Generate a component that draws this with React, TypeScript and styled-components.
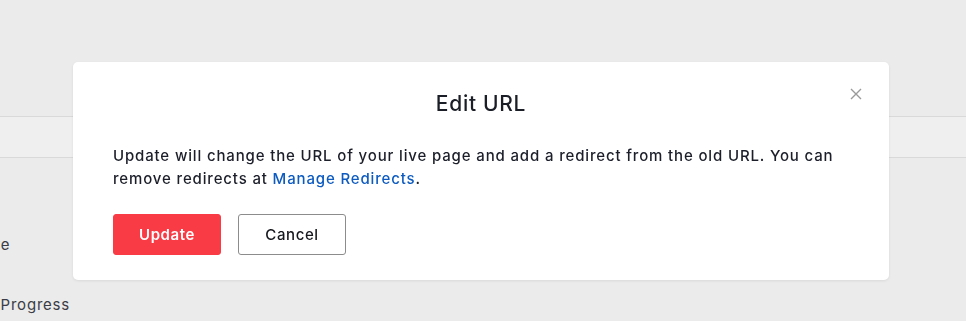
import React from "react";
import styled, { createGlobalStyle } from "styled-components";

const GlobalStyle = createGlobalStyle`
  html, body {
    margin: 0;
    padding: 0;
    background: #ebebeb;
    font-family: Inter, "Open Sans", Arial, sans-serif;
    overflow: hidden;
  }
`;

const Page = styled.div`
  width: 966px;
  height: 321px;
  display: flex;
  flex-direction: column;
  background: #ebebeb;
`;

const Header = styled.div`
  height: 116px;
  flex: 0 0 auto;
`;

const Band = styled.div`
  height: 40px;
  flex: 0 0 auto;
  background: #efefef;
  border-top: 1px solid #d9d9d9;
  border-bottom: 1px solid #d9d9d9;
`;

const List = styled.div`
  display: flex;
  flex-direction: column;
  gap: 38px;
  padding-top: 76px;
  color: #3a3d45;
  font-size: 15px;
  letter-spacing: 0.8px;
`;

const ListItem = styled.div<{ $shift: number }>`
  margin-left: ${(p) => -p.$shift}px;
  line-height: 22px;
  white-space: nowrap;
`;

const Overlay = styled.div`
  position: fixed;
  inset: 0;
  display: flex;
  justify-content: flex-start;
  align-items: flex-start;
  padding: 62px 0 0 73px;
`;

const Dialog = styled.div`
  position: relative;
  width: 816px;
  box-sizing: border-box;
  padding: 27px 40px 25px;
  background: #ffffff;
  border-radius: 5px;
  box-shadow: 0 1px 3px rgba(0, 0, 0, 0.08);
`;

const Title = styled.h2`
  margin: 0;
  text-align: center;
  font-size: 21px;
  font-weight: 500;
  line-height: 30px;
  color: #1b1e27;
  letter-spacing: 0.7px;
`;

const Close = styled.button`
  position: absolute;
  top: 26px;
  right: 27px;
  width: 12px;
  height: 12px;
  padding: 0;
  border: none;
  background: transparent;
  display: flex;
  cursor: pointer;
`;

const Body = styled.p`
  margin: 25px 0 0;
  font-size: 15px;
  font-weight: 500;
  line-height: 23px;
  color: #1c1f2a;
  letter-spacing: 0.85px;
  white-space: nowrap;
`;

const Link = styled.a`
  color: #0d5bc0;
  text-decoration: none;
`;

const Actions = styled.div`
  display: flex;
  gap: 17px;
  margin-top: 24px;
`;

const Button = styled.button<{ $primary?: boolean }>`
  height: 41px;
  width: 108px;
  border-radius: 3px;
  font-family: inherit;
  font-size: 15px;
  font-weight: ${(p) => (p.$primary ? 600 : 500)};
  letter-spacing: 0.6px;
  cursor: pointer;
  background: ${(p) => (p.$primary ? "#f83b45" : "#ffffff")};
  color: ${(p) => (p.$primary ? "#ffffff" : "#15171d")};
  border: 1px solid ${(p) => (p.$primary ? "#f83b45" : "#8c8c8c")};
`;

export default function App() {
  return (
    <>
      <GlobalStyle />
      <Page>
        <Header />
        <Band />
        <List>
          <ListItem $shift={22}>Live</ListItem>
          <ListItem $shift={19}>In Progress</ListItem>
        </List>
      </Page>
      <Overlay>
        <Dialog>
          <Title>Edit URL</Title>
          <Close aria-label="Close">
            <svg width="12" height="12" viewBox="0 0 12 12">
              <path d="M1 1L11 11M11 1L1 11" stroke="#9a9a9a" strokeWidth="1.4" />
            </svg>
          </Close>
          <Body>
            Update will change the URL of your live page and add a redirect from the old URL. You can
            <br />
            remove redirects at <Link href="#">Manage Redirects</Link>.
          </Body>
          <Actions>
            <Button $primary>Update</Button>
            <Button>Cancel</Button>
          </Actions>
        </Dialog>
      </Overlay>
    </>
  );
}
